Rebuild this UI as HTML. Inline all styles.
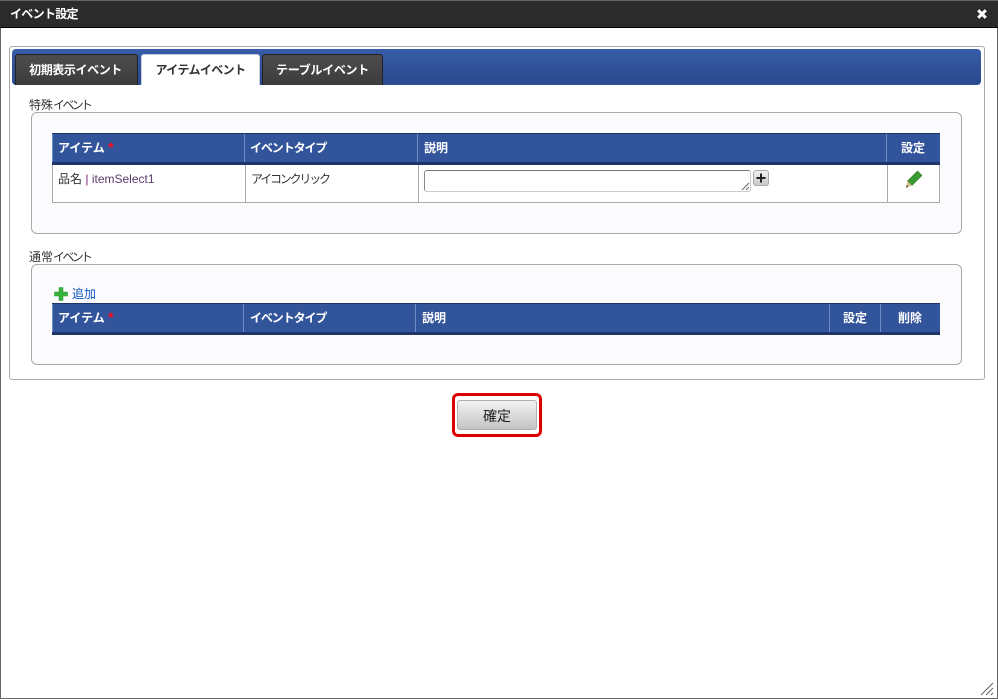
<!DOCTYPE html>
<html lang="ja"><head><meta charset="utf-8"><title>イベント設定</title>
<style>
html,body{margin:0;padding:0;background:#fff}
body{width:998px;height:699px;position:relative;overflow:hidden;font:12px/14px "Liberation Sans","WenQuanYi Zen Hei","Noto Sans CJK JP",sans-serif;color:#333}
div,span{position:absolute;box-sizing:border-box;white-space:nowrap}
.tab{top:54px;height:31px;border:1px solid #222;border-bottom:0;border-radius:3px 3px 0 0;background:linear-gradient(#4d4d4d,#3c3c3c);color:#fff;font-weight:bold;line-height:30px;text-align:center;font-size:12px}
.fs{left:31px;width:931px;border:1px solid #aaa;border-radius:6px;background:#fbfbfe}
.th{background:#32549b;border-top:1px solid #1f3468;border-bottom:3px solid #1f3468}
.s{top:0;bottom:0;width:1px;background:#6f8cc4}
.h{top:7px;color:#fff;font-weight:bold;font-size:12px}
.req{position:static;color:#ff0a1e;font-size:14px;font-weight:bold;line-height:0}
.v{top:0;bottom:0;width:1px;background:#aaa}
.k{position:static;letter-spacing:-2.700px}
</style></head><body>
<div style="left:0;top:0;width:998px;height:699px;border:1px solid #666;border-top:0"></div>
<div style="left:0;top:0;width:998px;height:28px;background:#2b2b2b;border-top:1px solid #666;border-bottom:1px solid #000"></div>
<span style="left:10px;top:7px;color:#fff;font-weight:bold;letter-spacing:-.7px">イベント設定</span>
<svg style="position:absolute;left:976px;top:8px" width="12" height="12" viewBox="0 0 12 12"><path d="M2.200 2.200L9.800 9.800M9.800 2.200L2.200 9.800" stroke="#fff" stroke-width="3"/></svg>

<div style="left:9px;top:46px;width:976px;height:334px;border:1px solid #aaa;border-radius:3px;background:#fff"></div>
<div style="left:12px;top:49px;width:969px;height:36px;border-radius:4px;background:linear-gradient(#375ca8,#2b4a8e);border-bottom:1px solid #2f539f"></div>
<div class="tab" style="left:15px;width:123px;letter-spacing:-.4px;padding-right:2px">初期表示イベント</div>
<div class="tab" style="left:141px;width:119px;background:#fff;color:#333;border:1px solid #c8cfdf;border-bottom:0;letter-spacing:-.6px">アイテムイベント</div>
<div class="tab" style="left:262px;width:121px;letter-spacing:-.3px">テーブルイベント</div>

<span style="left:29px;top:98px">特殊<span class="k">イベント</span></span>
<div class="fs" style="top:112px;height:122px"></div>
<div class="th" style="left:52px;top:133px;width:888px;height:32px">
<div class="s" style="left:0"></div><div class="s" style="left:192px"></div><div class="s" style="left:365px"></div><div class="s" style="left:834px"></div>
<span class="h" style="left:6px">アイテム <span class="req">*</span></span>
<span class="h" style="left:198px;letter-spacing:-1.100px">イベントタイプ</span>
<span class="h" style="left:372px">説明</span>
<span class="h" style="left:849px">設定</span>
</div>
<div style="left:52px;top:165px;width:888px;height:38px;background:#fff;border:1px solid #aaa;border-top:0">
<div class="v" style="left:192px"></div><div class="v" style="left:365px"></div><div class="v" style="left:834px"></div>
</div>
<span style="left:58px;top:172px">品名 <span style="position:static;color:#7a1f7a">|</span> <span style="position:static;color:#5a3a6a">itemSelect1</span></span>
<span style="left:251px;top:172px;letter-spacing:-2.200px">アイコンクリック</span>
<div style="left:424px;top:170px;width:327px;height:22px;border:1px solid #aaa;border-top-color:#777;border-left-color:#888;border-bottom-color:#ccc;border-right-color:#ccc;border-radius:3px;background:#fff"></div>
<svg style="position:absolute;left:741px;top:182px" width="9" height="9" viewBox="0 0 9 9"><path d="M1 8L8 1M5 8L8 5" stroke="#666" stroke-width="1" fill="none"/></svg>
<div style="left:753px;top:170px;width:16px;height:16px;border:1px solid #aaa;border-radius:3px;background:linear-gradient(#f0f0f0,#c8c8c8)"></div>
<svg style="position:absolute;left:755px;top:172px" width="12" height="12" viewBox="0 0 12 12"><path d="M1.500 6H10.500M6 1.500V10.500" stroke="#222" stroke-width="2"/></svg>
<svg style="position:absolute;left:905px;top:170px" width="18" height="18" viewBox="0 0 18 18"><path d="M12.500 1L17 5.500L7 15.500L2.500 11Z" fill="#3b9b32" stroke="#2c7a28" stroke-width=".6"/><path d="M2.500 11L7 15.500L1 17.500Z" fill="#d8bc8c"/><path d="M1 17.800L3.200 17L1.800 15Z" fill="#333"/></svg>

<span style="left:29px;top:250px">通常<span class="k">イベント</span></span>
<div class="fs" style="top:264px;height:101px"></div>
<svg style="position:absolute;left:54px;top:287px" width="14" height="14" viewBox="0 0 14 14"><path d="M5 0.500H9V5H13.500V9H9V13.500H5V9H0.500V5H5Z" fill="#36b13c" stroke="#2a9a30" stroke-width=".5"/></svg>
<span style="left:72px;top:287px;color:#0b55c4">追加</span>
<div class="th" style="left:52px;top:303px;width:888px;height:32px">
<div class="s" style="left:0"></div><div class="s" style="left:191px"></div><div class="s" style="left:363px"></div><div class="s" style="left:777px"></div><div class="s" style="left:828px"></div>
<span class="h" style="left:6px">アイテム <span class="req">*</span></span>
<span class="h" style="left:198px;letter-spacing:-1.100px">イベントタイプ</span>
<span class="h" style="left:370px">説明</span>
<span class="h" style="left:791px">設定</span>
<span class="h" style="left:846px">削除</span>
</div>

<div style="left:452px;top:393px;width:90px;height:44px;border:3px solid #dc0000;border-radius:6px;background:#fff"></div>
<div style="left:457px;top:400px;width:80px;height:30px;border:1px solid #b0b0b0;border-radius:3px;background:linear-gradient(#f2f2f2,#c4c4c4);text-align:center;line-height:31px;font-size:14px;color:#222">確定</div>

<svg style="position:absolute;left:980px;top:682px" width="15" height="14" viewBox="0 0 15 14"><path d="M1 13L13 1M6 13L13 6M11 13L13 11" stroke="#666" stroke-width="1" fill="none"/></svg>
</body></html>
